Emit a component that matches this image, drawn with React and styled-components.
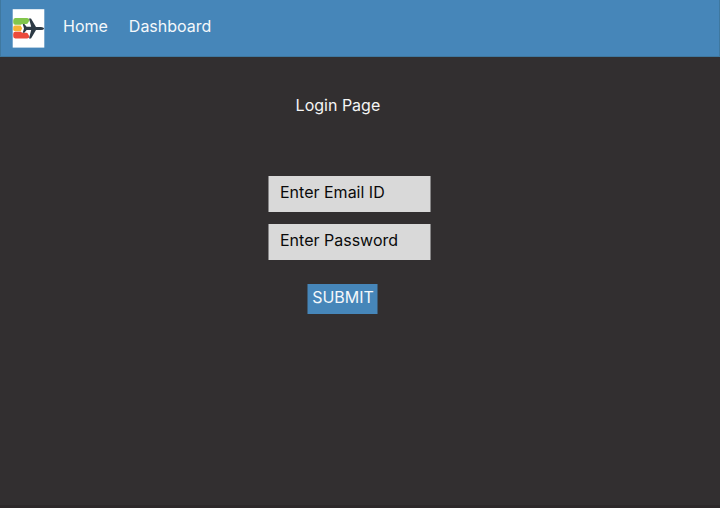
import React from 'react';
import styled, { createGlobalStyle } from 'styled-components';

const GlobalStyle = createGlobalStyle`
  * { box-sizing: border-box; }
  body { margin: 0; background: #322f30; font-family: Inter, sans-serif; }
`;

const Page = styled.div`
  display: flex;
  flex-direction: column;
  height: 508px;
  background: #322f30;
  border-bottom: 3px solid #2d292a;
`;

const Navbar = styled.nav`
  display: flex;
  align-items: flex-start;
  height: 57px;
  padding: 9px 0 0 11px;
  background: #4686b9;
  border: 1px solid #3f789f;
  border-top: 0;
`;

const Logo = styled.svg`
  display: block;
  width: 33px;
  height: 39px;
  margin-right: 18px;
`;

const NavLink = styled.a`
  margin: 7px 21px 0 0;
  font-size: 16px;
  line-height: 20px;
  color: #f4f8fb;
`;

const Title = styled.h1`
  margin: 38px 0 61px 295.6px;
  font-size: 16px;
  font-weight: 400;
  line-height: 20px;
  color: #f5f5f5;
`;

const Form = styled.form`
  display: flex;
  flex-direction: column;
  align-items: flex-start;
  gap: 12px;
  margin-left: 268px;
`;

const Field = styled.label`
  width: 163px;
  height: 36px;
  padding: 6px 11px;
  background: #d9d9d9;
  border: solid #868586;
  border-width: 0 1px;
  font-size: 16px;
  line-height: 20px;
  color: #0a0a0a;
`;

const Submit = styled.button`
  width: 71px;
  height: 30px;
  margin: 12px 0 0 39px;
  padding: 0 0 4px 1px;
  border: solid #3c5b75;
  border-width: 0 1px;
  background: #4686b9;
  font: 400 16px/20px Inter, sans-serif;
  color: #f4f8fb;
`;

function BrandLogo() {
  return (
    <Logo viewBox="0 0 33 39" role="img" aria-label="Airline logo">
      <rect x="0.7" y="0.2" width="31.6" height="38.4" fill="#fff" />
      <path d="M3.2 9H15.2Q17.6 9.2 17.3 11.5L16 14Q15.5 15 14.2 15H10.2L8.8 15.8H3.2Q1.2 15.5 1.2 13.4V11.5Q1.2 9.2 3.2 9Z" fill="#82c64c" />
      <path d="M3 16.4H8.6L10.2 19.3L8.8 22.2H3Q1.2 22.2 1.2 20.4V18.3Q1.2 16.5 3 16.4Z" fill="#f6b336" />
      <path d="M3.2 22.8H8.8L10.2 23.8H14.2Q15.6 23.9 16 25L17.3 27.2Q17.6 29.2 15.2 29.4H3.2Q1.2 29.2 1.2 27.2V24.9Q1.2 22.9 3.2 22.8Z" fill="#eb4b3c" />
      <path d="M32.2 19.4Q31.6 20.9 29 20.9H24L19 29.4H17L19.2 21H14.6L12.3 23.8H10.7L12 19.4L10.7 15H12.3L14.6 17.8H19.2L17 9.4H19L24 17.9H29Q31.6 17.9 32.2 19.4Z" fill="#2d3a45" />
    </Logo>
  );
}

export default function App() {
  return (
    <Page>
      <GlobalStyle />
      <Navbar>
        <BrandLogo />
        <NavLink>Home</NavLink>
        <NavLink>Dashboard</NavLink>
      </Navbar>
      <Title>Login Page</Title>
      <Form>
        <Field>Enter Email ID</Field>
        <Field>Enter Password</Field>
        <Submit type="button">SUBMIT</Submit>
      </Form>
    </Page>
  );
}
